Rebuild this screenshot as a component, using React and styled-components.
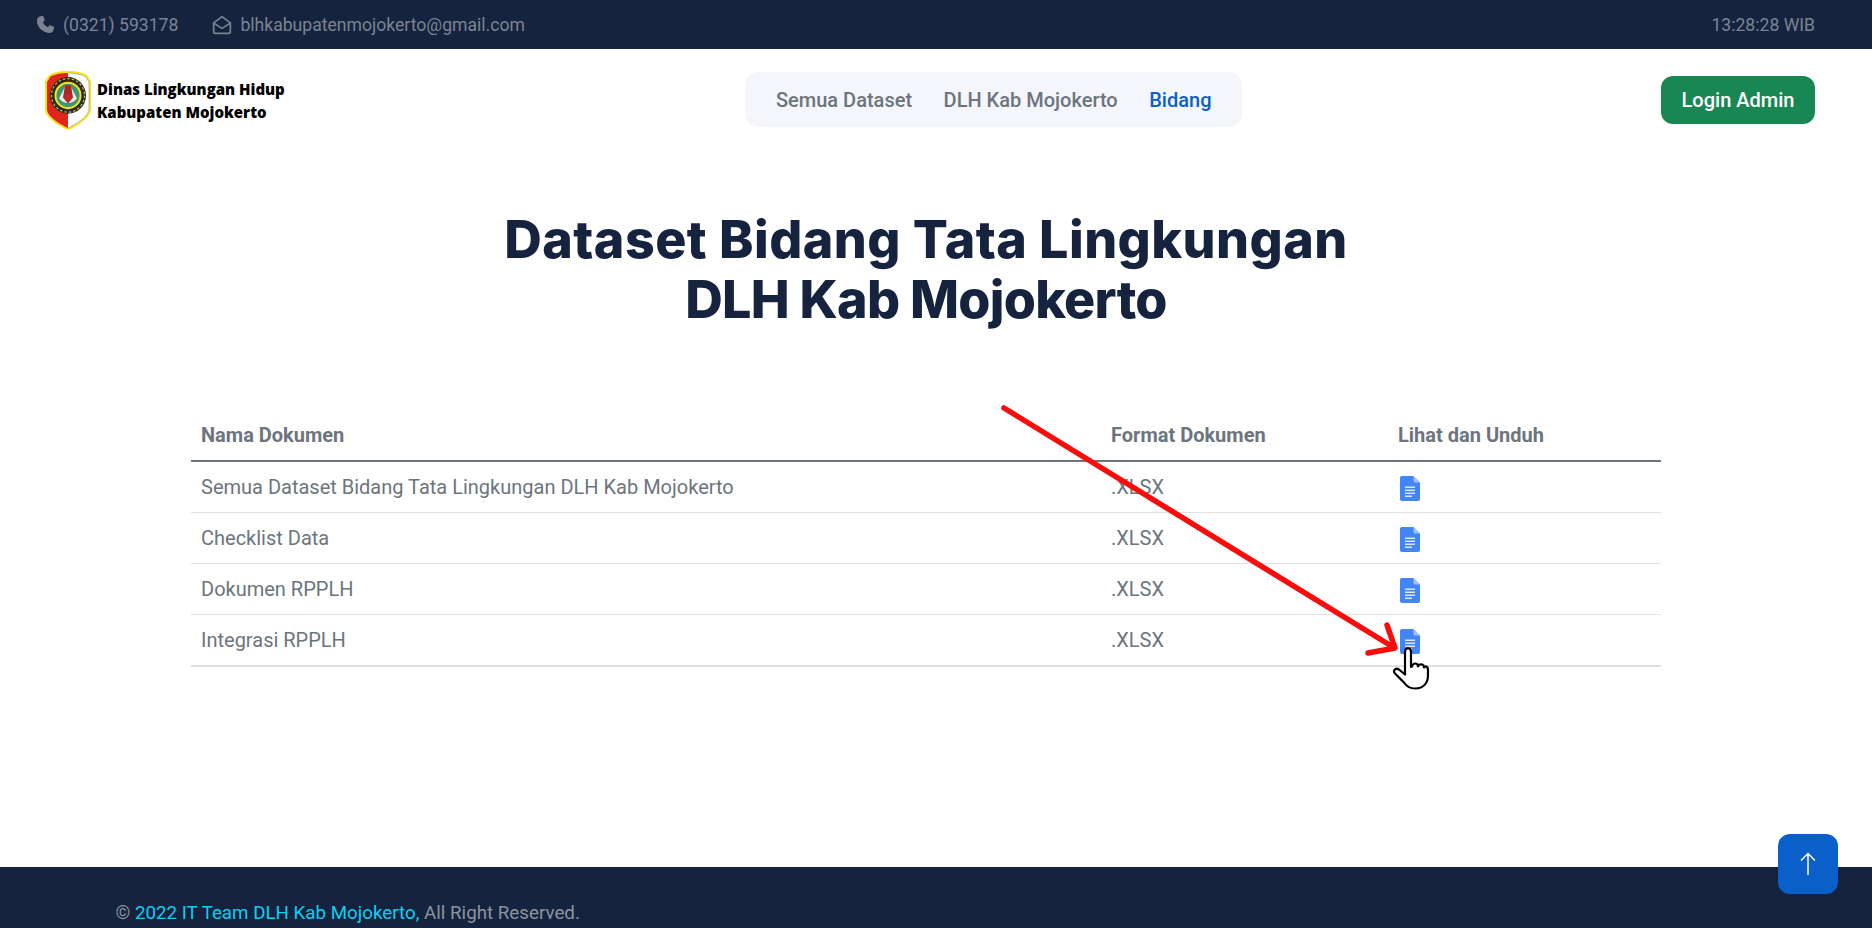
import React from 'react';
import styled, { createGlobalStyle } from 'styled-components';

const Global = createGlobalStyle`
  html, body { margin: 0; padding: 0; background: #fff; overflow: hidden; }
  * { box-sizing: border-box; }
  body { font-family: Roboto, "Liberation Sans", sans-serif; }
`;
const Page = styled.div`
  position: relative; height: 928px; display: flex; flex-direction: column; overflow: hidden;
`;
const TopBar = styled.div`
  height: 49px; flex: none; background: #15233f; color: #7c8391; font-size: 17.6px;
  display: flex; align-items: center; justify-content: space-between; padding: 0 57px 0 35px;
`;
const Contacts = styled.div`display: flex; align-items: center; gap: 34px;`;
const Contact = styled.span`display: inline-flex; align-items: center; gap: 8px;`;
const NavBar = styled.div`
  height: 102px; flex: none; padding: 0 57px 0 44px; display: flex; align-items: center; justify-content: space-between;
  position: relative;
`;
const Brand = styled.div`display: flex; align-items: center; gap: 5px; width: 701px;`;
const BrandText = styled.div`
  font-family: "Open Sans", sans-serif; font-weight: 800; font-size: 15px; line-height: 23px; color: #000; white-space: nowrap;
  padding-top: 2px;
`;
const Menu = styled.nav`
  width: 497px; height: 55px; margin-bottom: 1px; background: #f4f6fb; border-radius: 14px; display: flex; align-items: center;
  gap: 31.5px; padding-left: 31px; font-size: 20px; font-weight: 500; color: #6c757d;
`;
const MenuLink = styled.span`color: ${p => (p.$active ? '#0a5fc9' : '#6c757d')};`;
const Spacer = styled.div`flex: 1;`;
const LoginButton = styled.button`
  width: 154px; height: 48px; border: 0; border-radius: 12px; background: #198754; color: #fff;
  font: 500 20px Roboto, sans-serif;
`;
const Main = styled.main`flex: 1; padding: 58px 211px 0 191px;`;
const Title = styled.h1`
  margin: 0 0 81px; text-align: center; color: #15233f; font: 800 52px/60px Inter, sans-serif; padding-top: 1px;
`;
const TitleLine = styled.span`display: block; letter-spacing: ${p => p.$spacing};`;
const Table = styled.table`width: 1470px; border-collapse: collapse; table-layout: fixed; color: #6c757d; font-size: 20px;`;
const Th = styled.th`
  width: ${p => p.$w}; height: 50px; padding: 0 10px 2px; text-align: left; font-weight: 700; border-bottom: 2px solid #6c757d;
`;
const Td = styled.td`height: 51px; padding: 0 10px; border-bottom: 1px solid #dee2e6;`;
const LastTd = styled(Td)`height: 52px; padding-top: 1px; border-bottom: 2px solid #dcdfe3;`;
const DocWrap = styled.div`padding: 3px 0 0 2px;`;
const DocSvg = styled.svg`display: block;`;
const Footer = styled.footer`
  height: 61px; flex: none; background: #15233f; color: #8f939c; font-size: 18.75px; padding: 28px 0 0 115.5px; line-height: 37px;
`;
const FootLink = styled.span`color: #10cdf2;`;
const TopButton = styled.button`
  position: absolute; left: 1778px; top: 834px; width: 60px; height: 60px; border: 0; border-radius: 12px; background: #0a5fc9;
  display: flex; align-items: center; justify-content: center; padding: 0;
`;
const Overlay = styled.svg`position: absolute; left: 0; top: 0; pointer-events: none;`;

const Phone = () => (
  <svg width="20" height="20" viewBox="0 0 24 24" fill="#7c8391">
    <path d="M6.6 1.6 9.7 1l2.2 5.3-2.6 2.2c1 2.6 3.3 5 6.2 6.200l2.200-2.600 5.300 2.200-.6 3.200c-.3 2.300-2 4-4.400 4C8.900 21.500 1.500 13.900 2.500 6c.2-2.200 2-4.100 4.100-4.400z" />
  </svg>
);
const Mail = () => (
  <svg width="20" height="20" viewBox="0 0 24 24" fill="none" stroke="#7c8391" strokeWidth="2" strokeLinejoin="round">
    <path d="M2 9.500 12 2l10 7.500V20a2 2 0 0 1-2 2H4a2 2 0 0 1-2-2z" />
    <path d="m2.500 10 9.500 6 9.500-6" />
  </svg>
);
const Logo = () => (
  <svg width="48" height="61" viewBox="0 0 48 60" preserveAspectRatio="none">
    <path d="M24 1C16 1 9 2.500 5 5L1 11v27c0 9 14 17 23 21 9-4 23-12 23-21V11l-4-6C39 2.500 32 1 24 1z" fill="#f4e413" />
    <path d="M24 3C17 3 10 4.500 6.500 6.500L3 12v26c0 8 13 15 21 19z" fill="#e1251b" />
    <path d="M24 3c7 0 13.500 1.500 17.500 3.500L45 12v26c0 8-13 15-21 19z" fill="#fff" />
    <path d="M24 3c7 0 13.500 1.500 17.500 3.500L45 12v26c0 8-13 15-21 19" fill="none" stroke="#999" strokeWidth=".6" />
    <circle cx="24" cy="25" r="18" fill="#2a2a1c" />
    <circle cx="24" cy="25" r="16.500" fill="none" stroke="#c9bb45" strokeWidth="1.200" strokeDasharray="2.500 2" />
    <circle cx="24" cy="25" r="13.500" fill="#f2e31a" />
    <circle cx="24" cy="25" r="11.500" fill="#3d9478" />
    <path d="M15 28c3-6 5-9 6-12h6c1 3 3 6 6 12-5 6-13 6-18 0z" fill="#e5efe4" />
    <path d="M21 15h6l2 12-5 6-5-6z" fill="#a82a26" />
    <circle cx="24" cy="27" r="3.500" fill="#c1272d" />
  </svg>
);
const Doc = () => (
  <DocSvg width="20" height="25" viewBox="0 0 20 25">
    <path d="M2 0h11.500L20 6.500V23a2 2 0 0 1-2 2H2a2 2 0 0 1-2-2V2a2 2 0 0 1 2-2z" fill="#4285f4" />
    <path d="M13.500 0 20 6.500h-5a1.500 1.500 0 0 1-1.500-1.500z" fill="#a1c2fa" />
    <path d="M5 10.500h10v1.500H5zM5 13.500h10V15H5zM5 16.500h10V18H5zM5 19.500h7V21H5z" fill="#dbe7fd" />
  </DocSvg>
);
const rows = ['Semua Dataset Bidang Tata Lingkungan DLH Kab Mojokerto', 'Checklist Data', 'Dokumen RPPLH', 'Integrasi RPPLH'];

export default function App() {
  return (
    <Page>
      <Global />
      <TopBar>
        <Contacts>
          <Contact><Phone />(0321) 593178</Contact>
          <Contact><Mail />blhkabupatenmojokerto@gmail.com</Contact>
        </Contacts>
        <span>13:28:28 WIB</span>
      </TopBar>
      <NavBar>
        <Brand>
          <Logo />
          <BrandText>Dinas Lingkungan Hidup<br />Kabupaten Mojokerto</BrandText>
        </Brand>
        <Menu>
          <MenuLink>Semua Dataset</MenuLink>
          <MenuLink>DLH Kab Mojokerto</MenuLink>
          <MenuLink $active>Bidang</MenuLink>
        </Menu>
        <Spacer />
        <LoginButton>Login Admin</LoginButton>
      </NavBar>
      <Main>
        <Title>
          <TitleLine $spacing="0.45px">Dataset Bidang Tata Lingkungan</TitleLine>
          <TitleLine $spacing="-0.75px">DLH Kab Mojokerto</TitleLine>
        </Title>
        <Table>
          <thead>
            <tr>
              <Th $w="910px">Nama Dokumen</Th>
              <Th $w="287px">Format Dokumen</Th>
              <Th $w="273px">Lihat dan Unduh</Th>
            </tr>
          </thead>
          <tbody>
            {rows.map((r, i) => {
              const C = i === rows.length - 1 ? LastTd : Td;
              return (
                <tr key={r}>
                  <C>{r}</C>
                  <C>.XLSX</C>
                  <C><DocWrap><Doc /></DocWrap></C>
                </tr>
              );
            })}
          </tbody>
        </Table>
      </Main>
      <Footer>© <FootLink>2022 IT Team DLH Kab Mojokerto,</FootLink> All Right Reserved.</Footer>
      <TopButton aria-label="top">
        <svg width="16" height="24" viewBox="0 0 16 24" fill="none" stroke="#fff" strokeWidth="1.500">
          <path d="M8 23V1.500M1 8.500l7-7 7 7" />
        </svg>
      </TopButton>
      <Overlay width="1872" height="928" viewBox="0 0 1872 928">
        <path d="M1004 408 1393 647M1387 625l8 23-27 5" fill="none" stroke="#f80d0d" strokeWidth="5.500" strokeLinecap="round" strokeLinejoin="round" />
        <path d="M1405 652c0-5 6-5 6 0v15l1-.500c1-4 6-4 6 0 1-3 6-3 6 1 1-2 4-1 4 2v6c0 7-4 13-13 13-6 0-9-3-11-6l-9-9c-3-3 1-6 4-4l6 5z" fill="#fff" stroke="#000" strokeWidth="2.200" strokeLinejoin="round" />
      </Overlay>
    </Page>
  );
}
